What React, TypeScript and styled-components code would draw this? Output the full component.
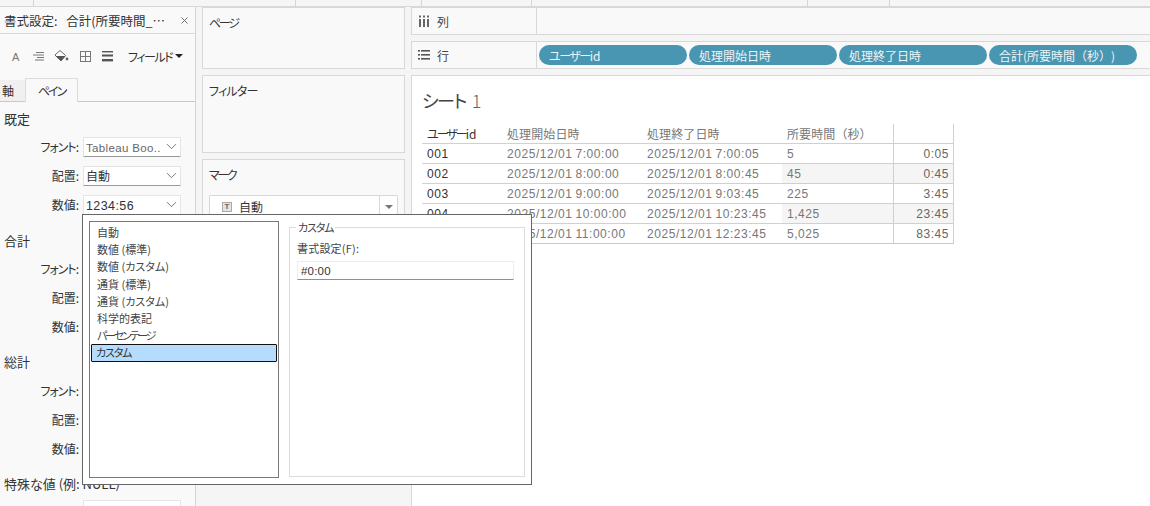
import React from 'react';
import styled, { createGlobalStyle } from 'styled-components';
import { ChevronDown, X } from 'lucide-react';

const Global = createGlobalStyle`
  html, body { margin: 0; padding: 0; background: #f5f5f5; overflow: hidden; }
  body { font-family: "Noto Sans CJK JP", "Liberation Sans", sans-serif; color: #333; font-feature-settings: "palt"; }
`;
const Page = styled.div`
  position: relative; width: 1150px; height: 506px; overflow: hidden; display: flex; flex-direction: column;
`;
const TopStrip = styled.div`
  height: 7px; flex: none; border-bottom: 1px solid #d8d8d8; display: flex; box-sizing: border-box;
`;
const TopTab = styled.div<{ $w: number }>`
  width: ${p => p.$w}px; flex: none; border-right: 1px solid #d4d4d4; box-sizing: border-box;
`;
const Body = styled.div`
  flex: 1; display: flex; min-height: 0;
`;
const FormatPane = styled.aside`
  width: 195px; flex: none; background: #f9f9f9; border-right: 1px solid #d4d4d4; display: flex; flex-direction: column; overflow: hidden;
`;
const PaneTitle = styled.div`
  height: 27px; flex: none; box-sizing: border-box; display: flex; align-items: center; justify-content: space-between; padding: 0 5px 0 4px; font-size: 12.5px; word-spacing: 6px; border-bottom: 1px solid #d8d8d8; white-space: nowrap; color: #333;
`;
const Toolbar = styled.div`
  height: 44px; flex: none; display: flex; align-items: center; padding-left: 10px; gap: 10px; color: #666; font-size: 12px;
`;
const FieldMenu = styled.span`
  margin-left: 4px; color: #333; display: flex; align-items: center; gap: 3px; font-size: 12px; white-space: nowrap;
`;
const Caret = styled.span`
  border-left: 4px solid transparent; border-right: 4px solid transparent; border-top: 4px solid #222; display: inline-block;
`;
const Kana = styled.span<{ $ls: number }>`
  letter-spacing: ${p => p.$ls}px;
`;
const Tabs = styled.div`
  height: 24px; flex: none; box-sizing: border-box; display: flex; align-items: flex-end; border-bottom: 1px solid #c8c8c8; font-size: 12px;
`;
const Tab = styled.div<{ $active?: boolean; $w: number }>`
  width: ${p => p.$w}px; height: ${p => p.$active ? 24 : 21}px; box-sizing: border-box; flex: none; display: flex; align-items: center; justify-content: ${p => p.$active ? 'center' : 'flex-start'}; padding-left: ${p => p.$active ? 0 : 2}px;
  background: ${p => p.$active ? '#f9f9f9' : '#f0f0f0'};
  ${p => p.$active ? 'border: 1px solid #dcdcdc; border-bottom: 0; margin-bottom: -1px;' : ''}
`;
const Section = styled.div<{ $mb?: number }>`
  flex: none; font-size: 13px; padding-left: 4px; height: 22px; line-height: 22px; margin: 6px 0 ${p => p.$mb ?? 2}px; white-space: nowrap;
`;
const Row = styled.div<{ $h?: number }>`
  flex: none; display: flex; align-items: center; height: ${p => p.$h ?? 29}px; font-size: 12px;
`;
const RowLabel = styled.span`
  width: 79px; text-align: right; flex: none; white-space: nowrap;
`;
const Select = styled.div`
  width: 98px; height: 20px; margin-left: 4px; background: #fff; border: 1px solid #e4e4e4; border-bottom: 1px solid #9a9a9a; display: flex; align-items: center; justify-content: space-between; padding: 0 0 0 2px; box-sizing: border-box; font-size: 12px; color: #333; border-radius: 1px; white-space: nowrap;
  svg { flex: none; color: #555; margin-right: 0; }
`;
const Light = styled.span`
  color: #666; font-family: "Liberation Sans", sans-serif; letter-spacing: 0.35px; font-size: 11.5px;
`;
const Num = styled.span`
  font-family: "Liberation Sans", sans-serif; letter-spacing: 0.4px; font-size: 12.5px;
`;
const Group = styled.div<{ $mt: number }>`
  margin-top: ${p => p.$mt}px; flex: none;
`;
const Middle = styled.div`
  width: 203px; flex: none; margin: 0 6px; display: flex; flex-direction: column; gap: 6px;
`;
const Card = styled.section<{ $h: number }>`
  height: ${p => p.$h}px; background: #f9f9f9; border: 1px solid #d8d8d8; box-sizing: border-box; padding: 8px 6px; font-size: 12px; line-height: 14px; color: #333; flex: none;
`;
const MarkSelect = styled.div`
  height: 22px; margin-top: 13px; background: #fff; border: 1px solid #d8d8d8; border-radius: 1px; display: flex; align-items: center; font-size: 12px; box-sizing: content-box;
`;
const MarkIcon = styled.span`
  width: 8px; height: 8px; background: #e4e4e4; border: 1px solid #aaa; font-size: 8px; line-height: 8px; text-align: center; font-family: "Liberation Sans", sans-serif; color: #666; margin: 0 7px 0 12px; font-weight: 700;
`;
const MarkArrow = styled.span`
  margin-left: auto; width: 17px; height: 100%; border-left: 1px solid #d8d8d8; display: flex; align-items: center; justify-content: center;
  &::after { content: ""; border-left: 4px solid transparent; border-right: 4px solid transparent; border-top: 4px solid #777; }
`;
const Main = styled.main`
  flex: 1; min-width: 0; display: flex; flex-direction: column; gap: 6px;
`;
const Shelf = styled.div`
  height: 28px; flex: none; background: #f9f9f9; border: 1px solid #d8d8d8; border-right: 0; box-sizing: border-box; display: flex; align-items: center; font-size: 12px;
`;
const ShelfLabel = styled.div`
  width: 125px; height: 100%; flex: none; border-right: 1px solid #d8d8d8; display: flex; align-items: center; gap: 7px; padding-left: 6px; box-sizing: border-box; color: #444;
`;
const Pills = styled.div`
  display: flex; gap: 2px; padding-left: 2px;
`;
const Pill = styled.div`
  width: 148px; height: 20px; border-radius: 10px; background: #4996b2; color: #eef4f7; font-size: 12px; display: flex; align-items: center; padding-left: 10px; box-sizing: border-box; white-space: nowrap;
`;
const FullWidth = styled.span`
  font-feature-settings: normal;
`;
const Sheet = styled.div`
  flex: 1; background: #fff; border: 1px solid #d8d8d8; border-right: 0; border-bottom: 0; padding: 8px 10px 0; min-height: 0;
`;
const SheetTitle = styled.h1`
  margin: 0; font-weight: 400; font-size: 18px; line-height: 32px; height: 32px; color: #444;
`;
const TitleNum = styled.span`
  font-weight: 300; color: #666; margin-left: 6px;
`;
const Table = styled.div`
  margin-top: 8px; width: 532px; border-bottom: 1px solid #c8c8c8;
`;
const TRow = styled.div`
  display: grid; grid-template-columns: 80px 140px 140px 112px 60px; height: 20px; box-sizing: border-box;
  border-bottom: 1px solid #d0d0d0;
  &:last-child { border-bottom: 0; height: 19px; }
`;
const Cell = styled.div<{ $dark?: boolean; $right?: boolean; $shade?: boolean; $sep?: boolean; $head?: boolean }>`
  display: flex; align-items: center; padding-left: 5px; white-space: nowrap; overflow: hidden;
  color: ${p => p.$dark ? '#333' : p.$right ? '#666' : '#777'};
  font-family: ${p => p.$head ? '"Noto Sans CJK JP", sans-serif' : '"Liberation Sans", "Noto Sans CJK JP", sans-serif'};
  letter-spacing: ${p => p.$head ? '0.1px' : '0.55px'}; word-spacing: ${p => p.$head ? 0 : -1}px; font-size: 12px;
  ${p => p.$right ? 'justify-content: flex-end; padding-right: 4px; padding-left: 0;' : ''}
  ${p => p.$shade ? 'background: #f5f5f5;' : ''}
  ${p => p.$sep ? 'border-right: 1px solid #d0d0d0; ' : ''}
`;
const Dialog = styled.div`
  position: absolute; left: 82px; top: 214px; width: 450px; height: 271px; background: #fff; border: 1px solid #666; box-sizing: border-box; padding: 6px; display: flex; gap: 10px;
`;
const ListBox = styled.div`
  width: 190px; height: 257px; flex: none; border: 1px solid #777; box-sizing: border-box; padding: 2px 1px; font-size: 11px; color: #444; display: flex; flex-direction: column;
`;
const ListItem = styled.div<{ $sel?: boolean }>`
  height: 17.2px; line-height: 17px; padding-left: ${p => p.$sel ? 4 : 6}px; flex: none; box-sizing: border-box; white-space: nowrap;
  ${p => p.$sel ? 'background: #b5dcfd; border: 1px solid #111; border-radius: 1px; line-height: 15px; color: #333;' : ''}
`;
const Fieldset = styled.fieldset`
  flex: 1; margin: 0; padding: 0 7px; height: 256px; border: 1px solid #dcdcdc; box-sizing: border-box; min-width: 0; font-size: 11px; color: #444;
`;
const Legend = styled.legend`
  padding: 0 2px; margin-left: -1px; line-height: 13px; font-size: 11px;
`;
const FieldLabel = styled.div`
  line-height: 18px; margin-top: 5px; letter-spacing: 0.2px;
`;
const TextInput = styled.div`
  width: 217px; height: 19px; margin-top: 4px; border: 1px solid #ededed; border-bottom: 1px solid #8f8f8f; box-sizing: border-box; padding-left: 3px; line-height: 18px; font-family: "Liberation Sans", sans-serif; font-size: 11.5px; color: #333; letter-spacing: 0.2px;
`;

const IconA = () => <svg width="12" height="12" viewBox="0 0 12 12"><text x="2" y="10.5" fontSize="11" fontFamily="Liberation Sans" fill="#777">A</text></svg>;
const IconAlign = () => <svg width="12" height="12" viewBox="0 0 12 12" stroke="#777" fill="none"><path d="M4 2.5h8M1 5h11M5 7.5h7M3 10h9" /></svg>;
const IconFill = () => <svg width="15" height="14" viewBox="0 0 15 14"><path d="M1 6 6 1.5 11.5 6.5 7 12 Z" fill="#fff" stroke="#666" /><path d="M1.5 7h10l-4.5 5Z" fill="#555" /><circle cx="13" cy="10" r="1.4" fill="#666" /></svg>;
const IconBorders = () => <svg width="12" height="12" viewBox="0 0 12 12" stroke="#777" fill="none"><rect x="1.5" y="1.5" width="10" height="10" /><path d="M6.5 1.5v10M1.5 6.5h10" /></svg>;
const IconLines = () => <svg width="13" height="12" viewBox="0 0 13 12" fill="#555"><rect x="1" y="1" width="11" height="1.4" /><rect x="1" y="4.5" width="11" height="2" /><rect x="1" y="9" width="11" height="2.4" /></svg>;
const IconCols = () => <svg width="12" height="12" viewBox="0 0 12 12" fill="#666"><rect x="1" y="0.5" width="2" height="2" /><rect x="5" y="0.5" width="2" height="2" /><rect x="9" y="0.5" width="2" height="2" /><rect x="1" y="4" width="2" height="8" /><rect x="5" y="4" width="2" height="8" /><rect x="9" y="4" width="2" height="8" /></svg>;
const IconRows = () => <svg width="12" height="10" viewBox="0 0 12 10" fill="#555"><rect x="0" y="0" width="2" height="1.6" /><rect x="3" y="0" width="9" height="1.6" /><rect x="0" y="4" width="2" height="1.6" /><rect x="3" y="4" width="9" height="1.6" /><rect x="0" y="8" width="2" height="1.6" /><rect x="3" y="8" width="9" height="1.6" /></svg>;

const SelectBox = ({ children }: { children?: React.ReactNode }) => (
  <Select><span>{children}</span><ChevronDown size={17} strokeWidth={1.1} /></Select>
);
const FontLabel = () => <RowLabel><Kana $ls={-1}>フォント</Kana>:</RowLabel>;

const rows = [
  ['001', '2025/12/01 7:00:00', '2025/12/01 7:00:05', '5', '0:05', false],
  ['002', '2025/12/01 8:00:00', '2025/12/01 8:00:45', '45', '0:45', true],
  ['003', '2025/12/01 9:00:00', '2025/12/01 9:03:45', '225', '3:45', false],
  ['004', '2025/12/01 10:00:00', '2025/12/01 10:23:45', '1,425', '23:45', true],
  ['005', '2025/12/01 11:00:00', '2025/12/01 12:23:45', '5,025', '83:45', false],
] as const;

export default function App() {
  return (
    <Page>
      <Global />
      <TopStrip>
        <TopTab $w={34} /><TopTab $w={262} /><TopTab $w={126} /><TopTab $w={110} /><TopTab $w={276} /><TopTab $w={82} />
      </TopStrip>
      <Body>
        <FormatPane>
          <PaneTitle><span>書式設定: 合計(所要時間_…</span><X size={11} color="#666" /></PaneTitle>
          <Toolbar>
            <IconA /><IconAlign /><IconFill /><IconBorders /><IconLines />
            <FieldMenu><Kana $ls={-1.5}>フィールド</Kana><Caret /></FieldMenu>
          </Toolbar>
          <Tabs><Tab $w={25}>軸</Tab><Tab $active $w={53}><Kana $ls={-2}>ペイン</Kana></Tab></Tabs>
          <Section>既定</Section>
          <Row><FontLabel /><SelectBox><Light>Tableau Boo..</Light></SelectBox></Row>
          <Row><RowLabel>配置:</RowLabel><SelectBox>自動</SelectBox></Row>
          <Row><RowLabel>数値:</RowLabel><SelectBox><Num>1234:56</Num></SelectBox></Row>
          <Group $mt={5}>
            <Section>合計</Section>
            <Row><FontLabel /></Row>
            <Row><RowLabel>配置:</RowLabel></Row>
            <Row><RowLabel>数値:</RowLabel></Row>
          </Group>
          <Group $mt={4}>
            <Section $mb={3}>総計</Section>
            <Row><FontLabel /></Row>
            <Row><RowLabel>配置:</RowLabel></Row>
            <Row><RowLabel>数値:</RowLabel></Row>
          </Group>
          <Group $mt={4}>
            <Section>特殊な値 (例: NULL)</Section>
            <Row $h={25}><RowLabel /><SelectBox /></Row>
          </Group>
        </FormatPane>
        <Middle>
          <Card $h={62}><Kana $ls={-2.3}>ページ</Kana></Card>
          <Card $h={78}><Kana $ls={-0.8}>フィルター</Kana></Card>
          <Card $h={200}><Kana $ls={-2.3}>マーク</Kana><MarkSelect><MarkIcon>T</MarkIcon>自動<MarkArrow /></MarkSelect></Card>
        </Middle>
        <Main>
          <Shelf><ShelfLabel><IconCols />列</ShelfLabel></Shelf>
          <Shelf>
            <ShelfLabel><IconRows />行</ShelfLabel>
            <Pills>
              <Pill><Kana $ls={-1.5}>ユーザー</Kana>id</Pill>
              <Pill>処理開始日時</Pill>
              <Pill>処理終了日時</Pill>
              <Pill>合計(所要時間<FullWidth>（秒）</FullWidth>)</Pill>
            </Pills>
          </Shelf>
          <Sheet>
            <SheetTitle><Kana $ls={-1.5}>シート</Kana><TitleNum>1</TitleNum></SheetTitle>
            <Table>
              <TRow>
                <Cell $dark $head><Kana $ls={-2}>ユーザー</Kana>id</Cell><Cell $head>処理開始日時</Cell><Cell $head>処理終了日時</Cell><Cell $head $sep>所要時間<FullWidth>（秒）</FullWidth></Cell><Cell $sep />
              </TRow>
              {rows.map(r => (
                <TRow key={r[0]}>
                  <Cell $dark>{r[0]}</Cell><Cell>{r[1]}</Cell><Cell>{r[2]}</Cell>
                  <Cell $shade={r[5]} $sep>{r[3]}</Cell><Cell $right $shade={r[5]} $sep>{r[4]}</Cell>
                </TRow>
              ))}
            </Table>
          </Sheet>
        </Main>
      </Body>
      <Dialog>
        <ListBox>
          <ListItem>自動</ListItem>
          <ListItem>数値 (標準)</ListItem>
          <ListItem>数値 (カスタム)</ListItem>
          <ListItem>通貨 (標準)</ListItem>
          <ListItem>通貨 (カスタム)</ListItem>
          <ListItem>科学的表記</ListItem>
          <ListItem><Kana $ls={-2.2}>パーセンテージ</Kana></ListItem>
          <ListItem $sel><Kana $ls={-1.2}>カスタム</Kana></ListItem>
        </ListBox>
        <Fieldset>
          <Legend><Kana $ls={-1.2}>カスタム</Kana></Legend>
          <FieldLabel>書式設定(F):</FieldLabel>
          <TextInput>#0:00</TextInput>
        </Fieldset>
      </Dialog>
    </Page>
  );
}
